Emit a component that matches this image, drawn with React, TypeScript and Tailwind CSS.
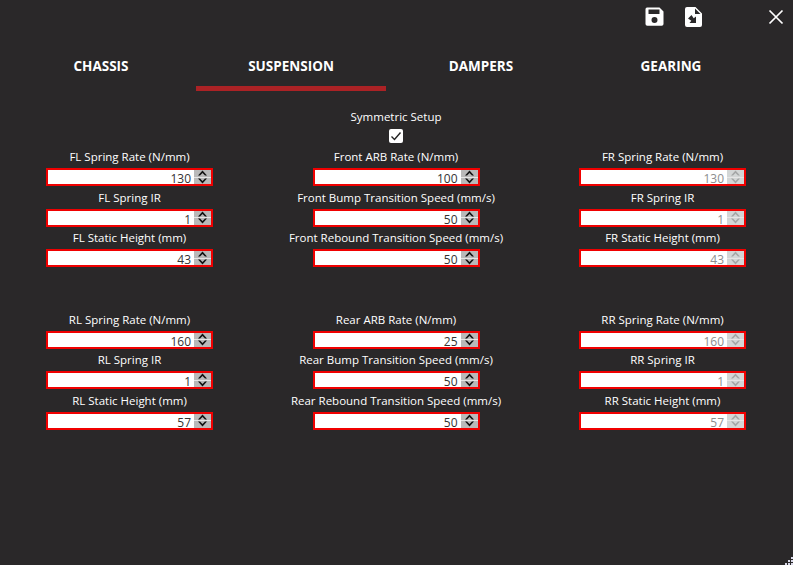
const tabs = ["CHASSIS", "SUSPENSION", "DAMPERS", "GEARING"];

type Field = { label: string; value: number };

const topRows: Field[][] = [
  [
    { label: "FL Spring Rate (N/mm)", value: 130 },
    { label: "FL Spring IR", value: 1 },
    { label: "FL Static Height (mm)", value: 43 },
  ],
  [
    { label: "Front ARB Rate (N/mm)", value: 100 },
    { label: "Front Bump Transition Speed (mm/s)", value: 50 },
    { label: "Front Rebound Transition Speed (mm/s)", value: 50 },
  ],
  [
    { label: "FR Spring Rate (N/mm)", value: 130 },
    { label: "FR Spring IR", value: 1 },
    { label: "FR Static Height (mm)", value: 43 },
  ],
];

const bottomRows: Field[][] = [
  [
    { label: "RL Spring Rate (N/mm)", value: 160 },
    { label: "RL Spring IR", value: 1 },
    { label: "RL Static Height (mm)", value: 57 },
  ],
  [
    { label: "Rear ARB Rate (N/mm)", value: 25 },
    { label: "Rear Bump Transition Speed (mm/s)", value: 50 },
    { label: "Rear Rebound Transition Speed (mm/s)", value: 50 },
  ],
  [
    { label: "RR Spring Rate (N/mm)", value: 160 },
    { label: "RR Spring IR", value: 1 },
    { label: "RR Static Height (mm)", value: 57 },
  ],
];

function Arrow({ down, disabled }: { down?: boolean; disabled?: boolean }) {
  return (
    <div
      className={`flex h-[6.5px] w-full items-center justify-center ${
        disabled ? "bg-[#d3d6d6]" : "bg-[#b9b9b9]"
      }`}
    >
      <svg width="11" height="6" viewBox="0 0 11 6" className={disabled ? "text-[#a4a6a6]" : "text-[#111111]"}>
        <path
          d={down ? "M1 0.5 L5.5 5.5 L10 0.5 L8 0.5 L5.5 3 L3 0.5 Z" : "M1 5.5 L5.5 0.5 L10 5.5 L8 5.5 L5.5 3 L3 5.5 Z"}
          fill="currentColor"
        />
      </svg>
    </div>
  );
}

function NumberBox({ field, disabled }: { field: Field; disabled?: boolean }) {
  return (
    <div className="flex h-[18px] w-[167px] border-2 border-[#f00000] bg-white">
      <div
        className={`flex-1 pr-[3px] pt-[1px] text-right text-[12px] leading-[15px] ${
          disabled ? "text-[#8d8d8d]" : "text-[#333333]"
        }`}
      >
        {field.value}
      </div>
      <div className="flex w-[17px] flex-col justify-center gap-[1px] bg-[#e6e6e6]">
        <Arrow disabled={disabled} />
        <Arrow down disabled={disabled} />
      </div>
    </div>
  );
}

function FieldColumn({ fields, disabled }: { fields: Field[]; disabled?: boolean }) {
  return (
    <div className="flex w-[167px] flex-col items-center">
      {fields.map((field) => (
        <div key={field.label} className="flex h-[40.5px] w-full flex-col items-center">
          <div className="h-[21px] whitespace-nowrap text-[11.5px] leading-[20px] text-white">
            {field.label}
          </div>
          <NumberBox field={field} disabled={disabled} />
        </div>
      ))}
    </div>
  );
}

function FieldGroup({ columns }: { columns: Field[][] }) {
  return (
    <div className="flex justify-between pl-[46px] pr-[47px]">
      <FieldColumn fields={columns[0]} />
      <FieldColumn fields={columns[1]} />
      <FieldColumn fields={columns[2]} disabled />
    </div>
  );
}

export default function App() {
  return (
    <div
      className="relative flex h-[565px] w-[793px] flex-col overflow-hidden bg-[#2a2829] text-white"
      style={{ fontFamily: '"Open Sans", "Noto Sans", sans-serif' }}
    >
      <div className="flex h-[32px] items-center pt-[1px]">
        <svg className="ml-[644px]" width="21" height="21" viewBox="0 0 21 21">
          <path
            fill="#fff"
            fillRule="evenodd"
            d="M3 1.5h12.5L19.5 5.5V18a1.8 1.8 0 0 1-1.8 1.8H3.3A1.8 1.8 0 0 1 1.5 18V3.3A1.8 1.8 0 0 1 3 1.5ZM4.5 3.5V8h11V3.5ZM10.5 11a3 3 0 1 0 0 6 3 3 0 0 0 0-6Z"
          />
        </svg>
        <svg className="ml-[19px]" width="20" height="22" viewBox="0 0 20 22">
          <path
            fill="#fff"
            fillRule="evenodd"
            d="M3 1h8.5L18 7.5V19a2 2 0 0 1-2 2H3a2 2 0 0 1-2-2V3a2 2 0 0 1 2-2ZM11 2.5V8h5.5ZM7.5 9l2.2 3.2L12 10.5V17H5.5l1.8-2.2L4 12.5Z"
          />
        </svg>
        <svg className="ml-[64px]" width="16" height="16" viewBox="0 0 16 16">
          <path d="M1.5 1.5 L14.5 14.5 M14.5 1.5 L1.5 14.5" stroke="#fff" strokeWidth="1.7" fill="none" />
        </svg>
      </div>

      <div className="ml-[6px] mt-[9px] flex w-[760px]">
        {tabs.map((tab) => (
          <div key={tab} className="flex h-[50px] w-[190px] flex-col items-center">
            <div className="flex h-[45px] items-center pt-[5px] text-[13.5px] font-bold text-white">{tab}</div>
            {tab === "SUSPENSION" && <div className="h-[5px] w-full bg-[#ab2225]" />}
          </div>
        ))}
      </div>

      <div className="mt-[16px] flex flex-col items-center pr-[1px]">
        <div className="h-[20px] text-[11.5px] leading-[20px] text-white">Symmetric Setup</div>
        <div className="mt-[2px] flex h-[14px] w-[14px] items-center justify-center rounded-[2px] bg-white">
          <svg width="12" height="10" viewBox="0 0 12 10">
            <path d="M1.5 5.5 L4.5 8.5 L10.5 1.5" fill="none" stroke="#222" strokeWidth="1.4" />
          </svg>
        </div>
      </div>

      <div className="mt-[4px]">
        <FieldGroup columns={topRows} />
      </div>
      <div className="mt-[41px]">
        <FieldGroup columns={bottomRows} />
      </div>

      {/* resize grip */}
      <svg className="absolute bottom-0 right-0" width="8" height="8" viewBox="0 0 8 8" fill="#d8d8e8">
        <rect x="6" y="0" width="2" height="2" />
        <rect x="3" y="3" width="2" height="2" />
        <rect x="6" y="3" width="2" height="2" />
        <rect x="0" y="6" width="2" height="2" />
        <rect x="3" y="6" width="2" height="2" />
        <rect x="6" y="6" width="2" height="2" />
      </svg>
    </div>
  );
}
